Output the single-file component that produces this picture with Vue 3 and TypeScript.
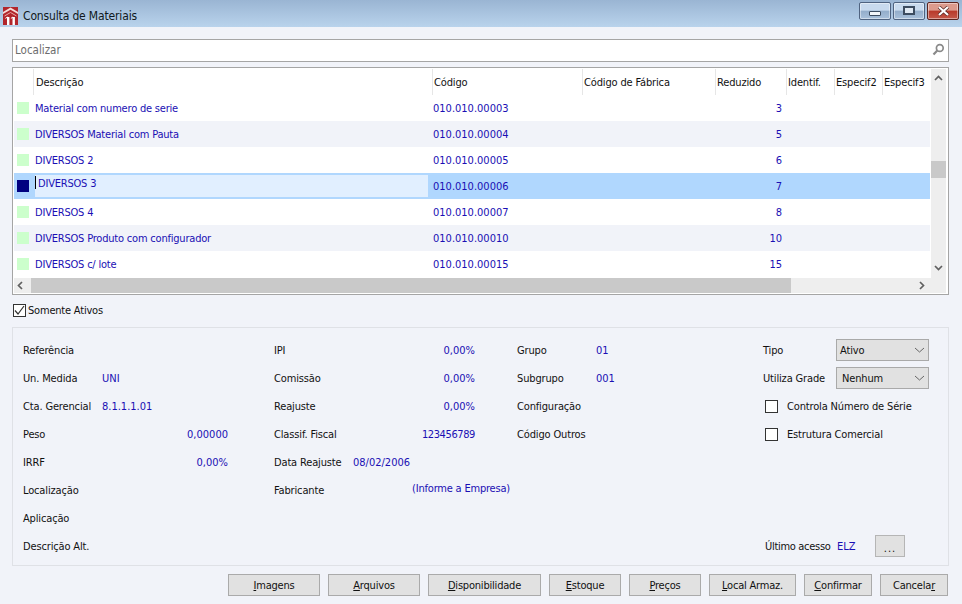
<script setup lang="ts">
interface Row { desc: string; code: string; red: string; sel?: boolean }
const rows: Row[] = [
  { desc: 'Material com numero de serie', code: '010.010.00003', red: '3' },
  { desc: 'DIVERSOS Material com Pauta', code: '010.010.00004', red: '5' },
  { desc: 'DIVERSOS 2', code: '010.010.00005', red: '6' },
  { desc: 'DIVERSOS 3', code: '010.010.00006', red: '7', sel: true },
  { desc: 'DIVERSOS 4', code: '010.010.00007', red: '8' },
  { desc: 'DIVERSOS Produto com configurador', code: '010.010.00010', red: '10' },
  { desc: 'DIVERSOS c/ lote', code: '010.010.00015', red: '15' },
]
const heads = [
  { t: 'Descrição', w: 399 }, { t: 'Código', w: 150 }, { t: 'Código de Fábrica', w: 133 },
  { t: 'Reduzido', w: 71 }, { t: 'Identif.', w: 48 }, { t: 'Especif2', w: 48 }, { t: 'Especif3', w: 48 },
]
interface F { l: string; v?: string; right?: boolean; up?: boolean; tight?: boolean }
const col1: F[] = [
  { l: 'Referência' }, { l: 'Un. Medida', v: 'UNI' }, { l: 'Cta. Gerencial', v: '8.1.1.1.01' },
  { l: 'Peso', v: '0,00000', right: true }, { l: 'IRRF', v: '0,00%', right: true },
  { l: 'Localização' }, { l: 'Aplicação' }, { l: 'Descrição Alt.' },
]
const col2: F[] = [
  { l: 'IPI', v: '0,00%', right: true }, { l: 'Comissão', v: '0,00%', right: true },
  { l: 'Reajuste', v: '0,00%', right: true }, { l: 'Classif. Fiscal', v: '123456789', right: true, tight: true },
  { l: 'Data Reajuste', v: '08/02/2006' }, { l: 'Fabricante', v: '(Informe a Empresa)', right: true, up: true },
]
const col3: F[] = [
  { l: 'Grupo', v: '01' }, { l: 'Subgrupo', v: '001' }, { l: 'Configuração' }, { l: 'Código Outros' },
]
const columns = [
  { cls: 'c1', items: col1 }, { cls: 'c2', items: col2 }, { cls: 'c3', items: col3 },
]
const buttons = [
  { pre: '', u: 'I', post: 'magens', w: 92 }, { pre: '', u: 'A', post: 'rquivos', w: 92 },
  { pre: '', u: 'D', post: 'isponibilidade', w: 113 }, { pre: '', u: 'E', post: 'stoque', w: 72 },
  { pre: '', u: 'P', post: 'reços', w: 72 }, { pre: '', u: 'L', post: 'ocal Armaz.', w: 87 },
  { pre: '', u: 'C', post: 'onfirmar', w: 68 }, { pre: 'Cancela', u: 'r', post: '', w: 68 },
]
</script>

<template>
  <div class="win">
    <header class="title">
      <svg class="logo" width="15" height="18" viewBox="0 0 15 18">
        <rect x="0" y="0" width="15" height="18" fill="#b2262c" />
        <path d="M0 5 L7.5 0.5 L15 5 V7 L7.5 2.8 L0 7Z" fill="#f6dcd8" />
        <path d="M1.5 9 L7.5 5.5 L13.5 9" fill="none" stroke="#e9a9a5" />
        <rect x="4" y="10" width="2.4" height="8" fill="#fff" />
        <rect x="9.5" y="10" width="2.4" height="8" fill="#fff" />
        <path d="M2.4 11.4 L4.5 10 M7.9 11.4 L10 10" stroke="#fff" />
      </svg>
      <span class="title-text">Consulta de Materiais</span>
      <div class="caps">
        <div class="cap"><span class="min"></span></div>
        <div class="cap"><span class="max"></span></div>
        <div class="cap close">
          <svg width="13" height="10" viewBox="0 0 13 10">
            <path d="M2 1 L11 9 M11 1 L2 9" stroke="#5a2a26" stroke-width="3.6" />
            <path d="M2 1 L11 9 M11 1 L2 9" stroke="#fff" stroke-width="2.2" />
          </svg>
        </div>
      </div>
    </header>

    <main class="body">
      <div class="search">
        <span class="ph">Localizar</span>
        <svg width="13" height="13" viewBox="0 0 13 13">
          <circle cx="7.8" cy="5" r="3.4" fill="none" stroke="#8a8a8a" stroke-width="1.7" />
          <path d="M5.3 7.5 L1.5 11.5" stroke="#8a8a8a" stroke-width="2.2" />
        </svg>
      </div>

      <section class="grid">
        <div class="grid-top">
          <div class="table">
            <div class="thead">
              <div class="indicator head"></div>
              <div v-for="h in heads" :key="h.t" class="th" :style="{ width: h.w + 'px' }">{{ h.t }}</div>
            </div>
            <div
              v-for="(r, i) in rows"
              :key="r.code"
              class="tr"
              :class="{ alt: i % 2 === 1, sel: r.sel }"
            >
              <div class="indicator"><span class="sq"></span></div>
              <div class="td desc">
                <span v-if="r.sel" class="editor"><i class="caret"></i>{{ r.desc }}</span>
                <template v-else>{{ r.desc }}</template>
              </div>
              <div class="td code">{{ r.code }}</div>
              <div class="td fab"></div>
              <div class="td red">{{ r.red }}</div>
            </div>
          </div>
          <div class="vscroll">
            <svg class="arrow" width="9" height="6" viewBox="0 0 9 6"><path d="M1 5 L4.5 1.5 L8 5" fill="none" stroke="#606060" stroke-width="1.7" /></svg>
            <div class="vthumb"></div>
            <svg class="arrow" width="9" height="6" viewBox="0 0 9 6"><path d="M1 1 L4.5 4.5 L8 1" fill="none" stroke="#606060" stroke-width="1.7" /></svg>
          </div>
        </div>
        <div class="hscroll">
          <svg class="harrow" width="6" height="9" viewBox="0 0 6 9"><path d="M5 1 L1.5 4.5 L5 8" fill="none" stroke="#606060" stroke-width="1.7" /></svg>
          <div class="hthumb"></div>
          <svg class="harrow" width="6" height="9" viewBox="0 0 6 9"><path d="M1 1 L4.5 4.5 L1 8" fill="none" stroke="#606060" stroke-width="1.7" /></svg>
        </div>
      </section>

      <label class="active">
        <span class="chk">
          <svg width="11" height="11" viewBox="0 0 11 11"><path d="M1 5.5 L4 9 L10 1" fill="none" stroke="#333" stroke-width="1.2" /></svg>
        </span>
        Somente Ativos
      </label>

      <section class="panel">
        <div v-for="c in columns" :key="c.cls" class="col" :class="c.cls">
          <div v-for="f in c.items" :key="f.l" class="field">
            <span class="lbl">{{ f.l }}</span>
            <span v-if="f.v" class="val" :class="{ right: f.right, up: f.up, tight: f.tight }">{{ f.v }}</span>
          </div>
        </div>
        <div class="col c4">
          <div class="field">
            <span class="lbl short">Tipo</span>
            <div class="combo"><span>Ativo</span><svg width="11" height="6" viewBox="0 0 11 6"><path d="M1 1 L5.5 5 L10 1" fill="none" stroke="#666" /></svg></div>
          </div>
          <div class="field">
            <span class="lbl short">Utiliza Grade</span>
            <div class="combo nen"><span>Nenhum</span><svg width="11" height="6" viewBox="0 0 11 6"><path d="M1 1 L5.5 5 L10 1" fill="none" stroke="#666" /></svg></div>
          </div>
          <div class="field check"><span class="box"></span>Controla Número de Série</div>
          <div class="field check"><span class="box"></span>Estrutura Comercial</div>
          <div class="spacer"></div>
          <div class="field last">
            <span class="la">Último acesso</span><span class="val elz">ELZ</span>
            <div class="dots"><span>...</span></div>
          </div>
        </div>
      </section>

      <footer class="actions">
        <button v-for="b in buttons" :key="b.u + b.post" class="btn" :style="{ width: b.w + 'px' }">{{ b.pre }}<u>{{ b.u }}</u>{{ b.post }}</button>
      </footer>
    </main>
  </div>
</template>

<style>
html, body { margin: 0; background: #f1f3f9; }
</style>

<style scoped>
.win {
  width: 962px; height: 604px; overflow: hidden; background: #f1f3f9;
  font-family: "DejaVu Sans Condensed", "DejaVu Sans", sans-serif; font-stretch: condensed; font-size: 11px; color: #111;
  letter-spacing: -0.15px;
}
.title {
  height: 27px; display: flex; align-items: center; padding-left: 3px; padding-top: 4px; box-sizing: border-box;
  background: linear-gradient(#9ab5d3, #b9d3ec);
}
.logo { margin-right: 5px; }
.title-text { font-size: 12px; color: #101820; }
.caps { margin-left: auto; margin-right: 3px; margin-top: -2px; display: flex; gap: 2px; align-self: flex-start; }
.cap {
  width: 32px; height: 18px; box-sizing: border-box; border: 1px solid #4f6380; border-radius: 2px;
  background: linear-gradient(#c8daee 0 45%, #93adca 50%, #a9c1db);
  display: flex; align-items: center; justify-content: center;
  box-shadow: inset 0 0 0 1px rgba(255,255,255,.45);
}
.cap.close { border-color: #5a2520; background: linear-gradient(#dc9a8c 0 45%, #b8392a 50%, #c4594a); }
.min { width: 12px; height: 5px; margin-top: 5px; background: #f3f6fa; border: 1px solid #3c4c60; box-sizing: border-box; border-radius: 1px; }
.max { width: 12px; height: 9px; margin-top: -1px; border: 2px solid #3c4c60; box-sizing: border-box; background: #dfe8f2; }
.body { padding: 12px 13px 0 12px; }
.search {
  height: 23px; box-sizing: border-box; border: 1px solid #a5a5a5; background: #fff;
  display: flex; align-items: center; justify-content: space-between; padding: 0 3px 2px 2px;
}
.ph { color: #6d6d6d; font-size: 11.5px; letter-spacing: 0; }
.grid { margin-top: 5px; height: 228px; box-sizing: border-box; border: 1px solid #a5a5a5; background: #fff; padding: 1px; display: flex; flex-direction: column; }
.grid-top { display: flex; height: 209px; }
.table { width: 916px; overflow: hidden; }
.thead { display: flex; height: 26px; background: #fff; }
.indicator { width: 20px; flex: none; display: flex; align-items: center; padding-left: 3px; box-sizing: border-box; }
.indicator.head { width: 19px; }
.sq { width: 12px; height: 12px; background: #ccffcc; }
.th {
  flex: none; box-sizing: border-box; padding-left: 1px; line-height: 28px; height: 26px;
  border-left: 1px solid #e6e6e6; white-space: nowrap; overflow: hidden;
}
.th:nth-child(2) { padding-left: 2px; }
.tr { display: flex; height: 26px; background: #fff; color: #1a0fb4; align-items: center; }
.tr.alt { background: #f1f3f9; }
.tr.sel { background: #b0d7fe; }
.tr.sel .sq { background: #000080; }
.td { flex: none; box-sizing: border-box; white-space: nowrap; }
.desc { width: 399px; padding-left: 1px; height: 100%; display: flex; align-items: center; letter-spacing: -0.2px; }
.code { width: 150px; letter-spacing: 0; }
.fab { width: 133px; }
.red { width: 66px; text-align: right; letter-spacing: 0; }
.editor { display: block; align-self: flex-start; margin: 2px 0 0 0; width: 393px; height: 22px; background: #e1efff; line-height: 13px; padding-top: 1px; box-sizing: border-box; color: #1a0fb4; }
.caret { display: inline-block; width: 1px; height: 13px; background: #000; vertical-align: -2px; margin-right: 2px; }
.vscroll { width: 15px; margin-left: 1px; background: #eeeeee; display: flex; flex-direction: column; align-items: center; justify-content: space-between; padding: 6px 0 7px; box-sizing: border-box; position: relative; }
.vthumb { position: absolute; top: 92px; left: 0; width: 15px; height: 17px; background: #c9c9c9; }
.arrow, .harrow { display: block; }
.hscroll { height: 15px; background: #eeeeee; display: flex; align-items: center; padding: 0 21px 0 3px; box-sizing: border-box; width: 932px; }
.hthumb { width: 760px; height: 15px; background: #c9c9c9; margin: 0 auto 0 8px; flex: none; }
.active { display: flex; align-items: center; height: 16px; margin-top: 7px; gap: 2px; letter-spacing: -0.2px; }
.chk { width: 13px; height: 13px; box-sizing: border-box; border: 1px solid #333; background: #fff; display: flex; align-items: center; justify-content: center; margin-left: 1px; }
.panel {
  margin-top: 9px; height: 239px; box-sizing: border-box; border: 1px solid #dfe1e6; display: flex; padding: 8px 0 0 10px;
}
.col { flex: none; }
.c1 { width: 251px; } .c2 { width: 243px; } .c3 { width: 246px; } .c4 { display: flex; flex-direction: column; width: 186px; }
.field { height: 28px; display: flex; align-items: center; white-space: nowrap; position: relative; }
.lbl { width: 79px; flex: none; }
.val { color: #1a0fb4; letter-spacing: 0; }
.val.right { margin-left: auto; }
.val.tight { letter-spacing: -0.4px; }
.c1 .field { width: 205px; }
.c2 .field { width: 201px; }
.val.up { margin-top: -4px; margin-right: -35px; letter-spacing: -0.2px; }
.lbl.short { width: 73px; }
.combo {
  width: 93px; height: 22px; box-sizing: border-box; border: 1px solid #a9a9a9; background: #e1e1e1;
  display: flex; align-items: center; justify-content: space-between; padding: 0 3px 0 3px;
}
.combo.nen span { padding-left: 2px; }
.check { padding-left: 2px; }
.box { width: 13px; height: 13px; box-sizing: border-box; border: 1px solid #333; background: #fff; margin-right: 9px; }
.spacer { height: 84px; flex: none; }
.la { width: 72px; margin-left: 2px; letter-spacing: -0.3px; }
.elz { width: 38px; }
.dots { width: 30px; height: 22px; box-sizing: border-box; border: 1px solid #b5b5b5; background: #e1e1e1; text-align: center; line-height: 25px; letter-spacing: 1px; }
.actions { display: flex; justify-content: flex-end; gap: 8px; margin-top: 8px; margin-right: 1px; }
.btn {
  height: 22px; box-sizing: border-box; border: 1px solid #aaa; background: #e1e1e1; color: #111; padding: 0;
  font: inherit; letter-spacing: -0.2px; display: block;
}
</style>
